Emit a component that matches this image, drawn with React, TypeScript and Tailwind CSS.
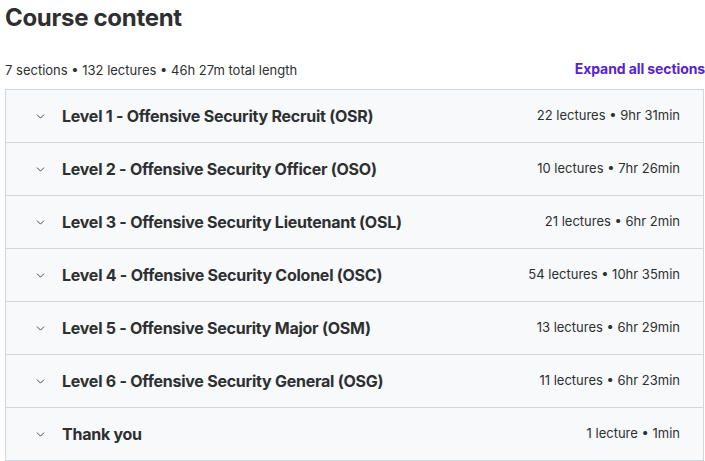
import { ChevronDown } from 'lucide-react'

interface Section {
  title: string
  meta: string
}

const sections: Section[] = [
  { title: 'Level 1 - Offensive Security Recruit (OSR)', meta: '22 lectures • 9hr 31min' },
  { title: 'Level 2 - Offensive Security Officer (OSO)', meta: '10 lectures • 7hr 26min' },
  { title: 'Level 3 - Offensive Security Lieutenant (OSL)', meta: '21 lectures • 6hr 2min' },
  { title: 'Level 4 - Offensive Security Colonel (OSC)', meta: '54 lectures • 10hr 35min' },
  { title: 'Level 5 - Offensive Security Major (OSM)', meta: '13 lectures • 6hr 29min' },
  { title: 'Level 6 - Offensive Security General (OSG)', meta: '11 lectures • 6hr 23min' },
  { title: 'Thank you', meta: '1 lecture • 1min' },
]

export default function App() {
  return (
    <div
      className="w-[705px] h-[461px] overflow-hidden bg-white text-[#2d2f31]"
      style={{ fontFamily: 'Inter, "Noto Sans", sans-serif' }}
    >
      <div className="ml-[5px] w-[700px]">
        <h2 className="pt-[3px] text-[24px] leading-[30px] font-bold tracking-[-0.3px]">Course content</h2>

        <div className="mt-[29px] flex items-center justify-between h-[16px]">
          <span className="text-[13px] leading-[16px]">7 sections • 132 lectures • 46h 27m total length</span>
          <button className="text-[14px] leading-[16px] font-bold text-[#5624d0] tracking-[-0.1px] -mt-[2px]">
            Expand all sections
          </button>
        </div>

        {/* Collapsed section list */}
        <div className="mt-[11px] w-[699px] border border-[#d1d7dc]">
          {sections.map((section, index) => (
            <div
              key={index}
              className={`box-content flex items-center h-[52px] bg-[#f7f9fa] pl-[28px] pr-[23px] ${
                index > 0 ? 'border-t border-[#d1d7dc]' : ''
              }`}
            >
              <ChevronDown className="w-[13px] h-[13px] text-[#2d2f31]" strokeWidth={1.6} />
              <span className="ml-[15px] text-[16px] font-bold tracking-[-0.25px]">{section.title}</span>
              <span className="ml-auto text-[13px]">{section.meta}</span>
            </div>
          ))}
        </div>
      </div>
    </div>
  )
}
